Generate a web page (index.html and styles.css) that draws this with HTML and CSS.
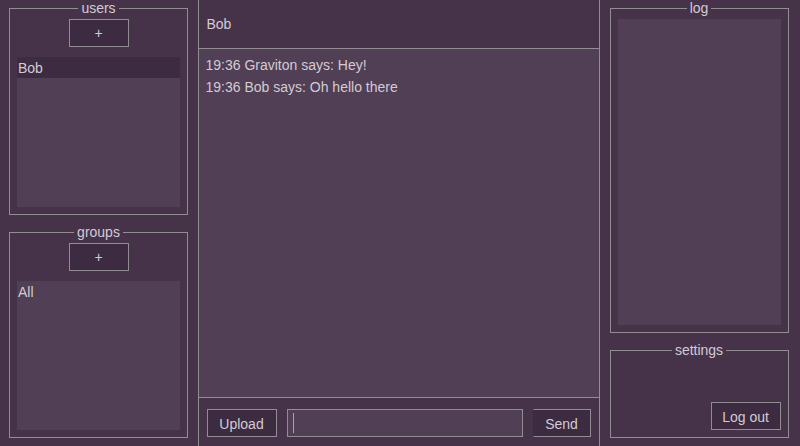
FILE: index.html
```html
<!DOCTYPE html>
<html>
<head>
<meta charset="utf-8">
<link rel="stylesheet" href="styles.css">
</head>
<body>
<div class="app">
  <div class="side side-left">
    <fieldset class="panel panel-users">
      <legend>users</legend>
      <div class="panel-body">
        <button class="btn btn-add">+</button>
        <div class="list list-users">
          <div class="item selected">Bob</div>
        </div>
      </div>
    </fieldset>
    <fieldset class="panel panel-groups">
      <legend>groups</legend>
      <div class="panel-body">
        <button class="btn btn-add">+</button>
        <div class="list list-groups">
          <div class="item">All</div>
        </div>
      </div>
    </fieldset>
  </div>
  <div class="chat">
    <div class="chat-header">Bob</div>
    <div class="messages">
      <div class="msg">19:36 Graviton says: Hey!</div>
      <div class="msg">19:36 Bob says: Oh hello there</div>
    </div>
    <div class="composer">
      <button class="btn btn-upload">Upload</button>
      <div class="input"><span class="caret"></span></div>
      <button class="btn btn-send">Send</button>
    </div>
  </div>
  <div class="side side-right">
    <fieldset class="panel panel-log">
      <legend>log</legend>
      <div class="logbox"></div>
    </fieldset>
    <fieldset class="panel panel-settings">
      <legend>settings</legend>
      <div class="settings-body">
        <button class="btn btn-logout">Log out</button>
      </div>
    </fieldset>
  </div>
</div>
</body>
</html>
```

FILE: styles.css
```css
html, body {
  margin: 0;
  padding: 0;
  height: 100%;
  background: #46334a;
  overflow: hidden;
}
body {
  font-family: "Liberation Sans", Arial, sans-serif;
  font-size: 14px;
  color: #d3cbd3;
}
.app {
  display: flex;
  height: 446px;
  width: 800px;
}
.side {
  display: flex;
  flex-direction: column;
  gap: 9px;
}
.side-left {
  width: 198px;
  padding-left: 9px;
  box-sizing: border-box;
}
.side-right {
  width: 201px;
  padding-left: 10px;
  box-sizing: border-box;
}
.panel {
  margin: 0;
  padding: 0 7px 7px 7px;
  border: 1px solid #928d93;
  width: 179px;
  box-sizing: border-box;
  min-width: 0;
}
.panel legend {
  margin: 0 auto;
  padding: 0 3px;
  line-height: 16px;
  font-size: 14px;
  color: #d3cbd3;
}
.panel-users { height: 215px; }
.panel-groups { height: 214px; }
.panel-log { height: 333px; }
.panel-settings { height: 96px; }

.panel-body {
  display: flex;
  flex-direction: column;
  align-items: center;
}

.btn {
  font-family: "Liberation Sans", Arial, sans-serif;
  font-size: 14px;
  color: #d3cbd3;
  background: #3d2b41;
  border: 1px solid #928d93;
  height: 28px;
  padding: 2px 0 0 0;
  box-sizing: border-box;
  border-radius: 0;
}
.btn-add {
  width: 60px;
  margin-top: 3px;
  padding-top: 0;
}
.list {
  margin-top: 10px;
  width: 100%;
  background: #513f55;
}
.list-users { height: 150px; }
.list-groups { height: 149px; }
.item {
  height: 21px;
  line-height: 21px;
  padding: 1px 0 0 1px;
  box-sizing: border-box;
}
.item.selected {
  background: #3d2b41;
}

.chat {
  width: 402px;
  box-sizing: border-box;
  border-left: 1px solid #928d93;
  border-right: 1px solid #928d93;
  display: flex;
  flex-direction: column;
}
.chat-header {
  height: 49px;
  box-sizing: border-box;
  border-bottom: 1px solid #928d93;
  padding-left: 8px;
  line-height: 48px;
}
.messages {
  flex: 1;
  background: #513f55;
  border-bottom: 1px solid #928d93;
  padding: 5px 0 0 7px;
}
.msg {
  line-height: 22px;
}
.composer {
  height: 48px;
  display: flex;
  align-items: flex-start;
  gap: 10px;
  padding: 11px 8px 0 8px;
  box-sizing: border-box;
}
.btn-upload { width: 70px; }
.input {
  width: 236px;
  height: 28px;
  box-sizing: border-box;
  border: 1px solid #928d93;
  background: #513f55;
  padding: 3px 0 0 5px;
}
.caret {
  display: block;
  width: 1px;
  height: 20px;
  background: #a8a2a9;
}
.btn-send {
  width: 58px;
  border-left-color: #3d2b41;
}
.logbox {
  margin-top: 3px;
  height: 306px;
  background: #513f55;
}
.settings-body {
  display: flex;
  justify-content: flex-end;
  padding-top: 44px;
}
.btn-logout {
  width: 70px;
}
```
